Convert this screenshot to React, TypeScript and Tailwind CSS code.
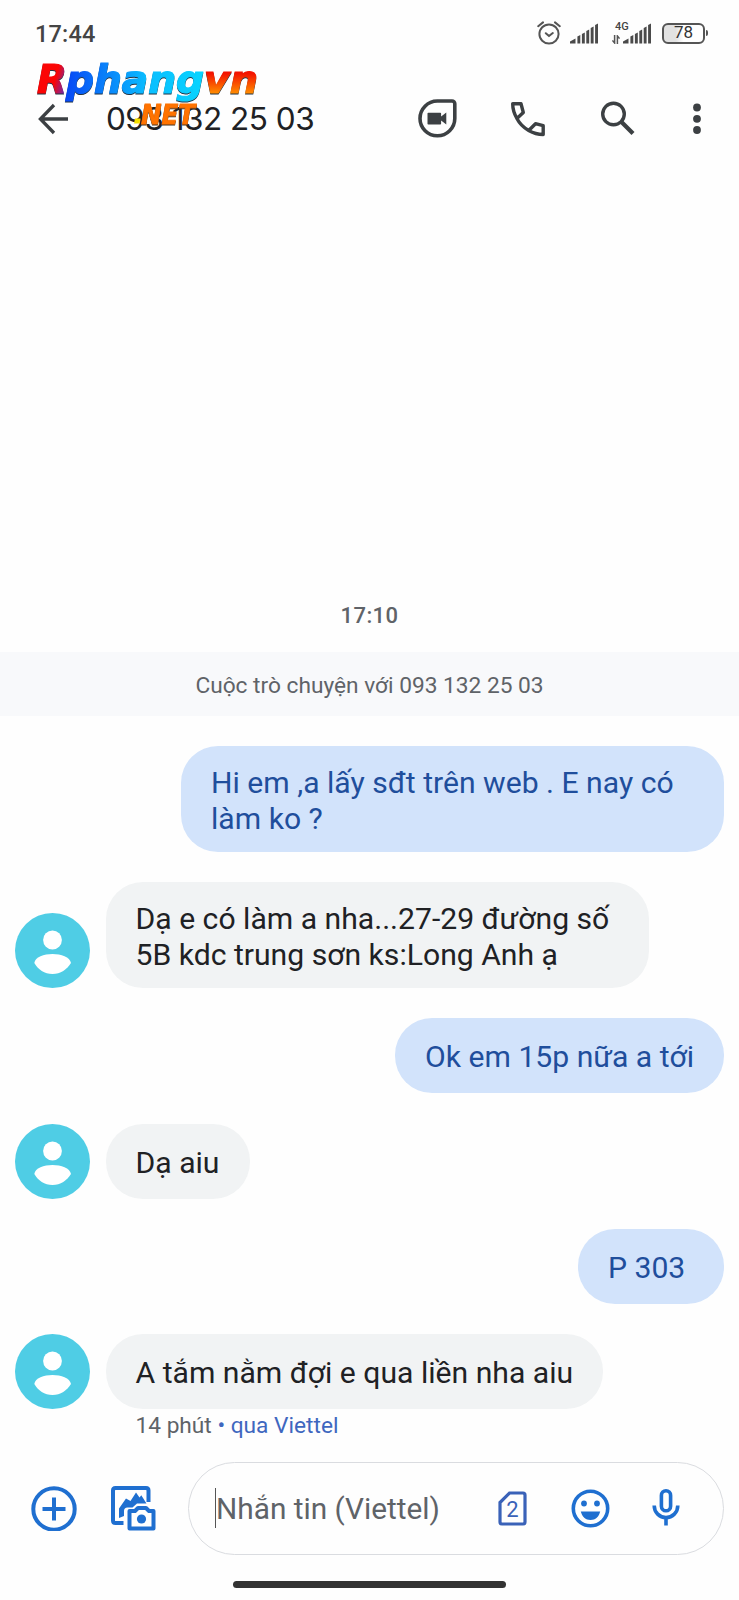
import type { ReactNode } from "react";

const INK = "#3c4043";
const BLUE = "#1f6fd0";

type Message = { text: string; mine?: boolean; size: string };

const messages: Message[] = [
  { text: "Hi em ,a lấy sđt trên web . E nay có\nlàm ko ?", mine: true, size: "w-[543px] leading-[35.5px]" },
  { text: "Dạ e có làm a nha...27-29 đường số\n5B kdc trung sơn ks:Long Anh ạ", size: "w-[543px] leading-[35.5px]" },
  { text: "Ok em 15p nữa a tới", mine: true, size: "w-[329px] leading-[40px]" },
  { text: "Dạ aiu", size: "w-[144px] leading-[40px]" },
  { text: "P 303", mine: true, size: "w-[146px] leading-[40px]" },
  { text: "A tắm nằm đợi e qua liền nha aiu", size: "w-[497px] leading-[40px]" },
];

function SignalBars() {
  return (
    <svg width="29" height="21" viewBox="0 0 29 21" fill="#4a4a4a">
      <path d="M0 20.5V18.5L5.5 15.5V20.5Z" />
      <path d="M7.4 20.5V13.5L10.3 12V20.5Z" />
      <path d="M11.9 20.5V11L14.8 9.5V20.5Z" />
      <path d="M16.3 20.5V8L19.2 6.5V20.5Z" />
      <path d="M20.7 20.5V5L23.6 3.5V20.5Z" />
      <path d="M25.1 20.5V2L28 .5V20.5Z" />
    </svg>
  );
}

function StatusBar() {
  return (
    <div className="flex h-[66px] items-center justify-between pl-[35px] pr-[31px]">
      <span className="mt-[3px] text-[23.5px] font-medium tracking-[0.2px] text-[#444]">17:44</span>
      <div className="flex items-center">
        <svg width="24" height="24" viewBox="0 0 24 24" fill="none" stroke="#555" strokeWidth="2" strokeLinecap="round">
          <circle cx="12" cy="13" r="9.6" />
          <path d="M8.8 12.2 12 15l3.8-3M1.2 5.2 6 1.4M22.8 5.2 18 1.4" />
        </svg>
        <div className="ml-[9px]">
          <SignalBars />
        </div>
        <div className="relative ml-[24px]">
          <SignalBars />
          <span className="absolute -left-[8px] -top-[2px] text-[11px] font-medium leading-[12px] text-[#444]">4G</span>
          <svg className="absolute -left-[11px] top-[12px]" width="8" height="9" viewBox="0 0 8 9" fill="none" stroke="#555" strokeWidth="1.5">
            <path d="M2.6 0v8L.4 5.4M5.4 9V1l2.2 2.6" />
          </svg>
        </div>
        <div className="ml-[10px] flex h-[21px] w-[43px] items-center justify-center rounded-[6px] border-2 border-[#555] bg-linear-to-r from-[#e2e2e2] from-30% to-white to-50% text-[17px] text-[#333]">
          78
        </div>
        <div className="ml-px h-[6px] w-[2px] rounded-r bg-[#555]" />
      </div>
    </div>
  );
}

function Logo() {
  return (
    <svg
      className="absolute left-[30px] top-[55px]"
      width="240"
      height="80"
      viewBox="0 0 240 80"
      fontFamily="DejaVu Sans"
      fontWeight="bold"
      fontStyle="italic"
    >
      <defs>
        <linearGradient id="logo-r" gradientUnits="userSpaceOnUse" x1="24" x2="38" y1="28" y2="32">
          <stop offset="0" stopColor="#fb0505" />
          <stop offset="1" stopColor="#5a30c8" />
        </linearGradient>
        <linearGradient id="logo-phang" gradientUnits="userSpaceOnUse" x1="36" x2="172" y1="0" y2="0">
          <stop offset="0" stopColor="#0848f5" />
          <stop offset="0.6" stopColor="#0abeff" />
          <stop offset="1" stopColor="#08d4ff" />
        </linearGradient>
        <linearGradient id="logo-vn" gradientUnits="userSpaceOnUse" x1="0" x2="0" y1="16" y2="38">
          <stop offset="0.1" stopColor="#f41200" />
          <stop offset="1" stopColor="#ff8a00" />
        </linearGradient>
      </defs>
      <g fontSize="39" strokeWidth="1.2" className="drop-shadow-[0.5px_1px_0.5px_#234]">
        <text x="7" y="38" textLength="30" lengthAdjust="spacingAndGlyphs" fill="url(#logo-r)" stroke="url(#logo-r)">R</text>
        <text x="36" y="38" textLength="138" lengthAdjust="spacingAndGlyphs" fill="url(#logo-phang)" stroke="url(#logo-phang)">phang</text>
        <text x="174" y="38" textLength="54" lengthAdjust="spacingAndGlyphs" fill="url(#logo-vn)" stroke="url(#logo-vn)">vn</text>
      </g>
      <g fontSize="27" strokeWidth="0.8" className="drop-shadow-[0.5px_1px_0.5px_#432]">
        <text x="111" y="69" textLength="54" lengthAdjust="spacingAndGlyphs" fill="#ff7300" stroke="#ff7300">NET</text>
      </g>
      <path d="M105 63.5h5.5l-1 5H104z" fill="#f5e000" />
    </svg>
  );
}

function Header() {
  return (
    <div className="flex h-[105px] items-center pl-[37px] pr-[36px]">
      <svg width="32" height="32" viewBox="0 0 32 32" fill="none" stroke={INK} strokeWidth="3.3">
        <path d="M31 16H4M17 2 3.4 16 17 30" />
      </svg>
      <span className="ml-[37px] w-[220px] whitespace-nowrap font-[Inter] text-[31.5px] font-normal tracking-[-0.5px] text-[#202124]">
        093 132 25 03
      </span>
      <svg className="ml-[92px]" width="39" height="39" viewBox="0 0 39 39">
        <path d="M19.3 2H34a2.8 2.8 0 0 1 2.8 2.8v14.7A17.4 17.4 0 1 1 19.3 2Z" fill="none" stroke={INK} strokeWidth="3.6" />
        <path d="M9.5 14.5q0-.8.8-.8h12q.8 0 .8.8v3l5.2-4v12l-5.2-4v3.2q0 .8-.8.8h-12q-.8 0-.8-.8z" fill={INK} />
      </svg>
      <svg className="ml-[53px]" width="36" height="36" viewBox="0 0 36 36" fill="none" stroke={INK} strokeWidth="3.4" strokeLinejoin="round">
        <path d="M2.7 2.8H11L13.3 11.5L6.9 17.5C4.3 13 2.7 8 2.7 2.8ZM6.9 17.5C9.5 22.5 13.5 26.5 18.7 29.5M18.7 29.5L25.5 22.7L33.2 24.7V33.5C28 33.5 23 32 18.7 29.5Z" />
      </svg>
      <svg className="ml-[54px]" width="35" height="35" viewBox="0 0 35 35" fill="none" stroke={INK}>
        <circle cx="13.5" cy="13" r="10.8" strokeWidth="3.4" />
        <path d="m21.5 21 11.5 11.5" strokeWidth="4.2" />
      </svg>
      <svg className="ml-auto" width="12" height="32" viewBox="0 0 12 32" fill={INK}>
        <circle cx="6" cy="4.5" r="3.9" />
        <circle cx="6" cy="15.8" r="3.9" />
        <circle cx="6" cy="27" r="3.9" />
      </svg>
    </div>
  );
}

function Avatar() {
  return (
    <svg className="shrink-0" width="75" height="75" viewBox="0 0 75 75">
      <circle cx="37.5" cy="37.5" r="37.5" fill="#4fcde5" />
      <circle cx="37.5" cy="27" r="9.4" fill="#fff" />
      <path d="M19.3 50C20 44 29 41 37.5 41S55 44 56 50C52 56.5 45.5 61 37.5 61S23 56.5 19.3 50Z" fill="#fff" />
    </svg>
  );
}

function Bubble({ message }: { message: Message }) {
  const tone = message.mine ? "bg-[#d2e3fb] text-[#1f4e9c]" : "bg-[#f1f3f4] text-[#202124]";
  return (
    <div className={message.mine ? "flex justify-end" : "flex items-end gap-[15.5px]"}>
      {!message.mine && <Avatar />}
      <p className={`${message.size} ${tone} min-h-[75px] whitespace-pre rounded-[37px] px-[30px] pb-[16px] pt-[19px] text-[30.15px]`}>
        {message.text}
      </p>
    </div>
  );
}

function IconBox({ className = "", children }: { className?: string; children: ReactNode }) {
  return (
    <svg className={`shrink-0 ${className}`} width="46" height="46" viewBox="0 0 46 46" fill="none" stroke={BLUE} strokeWidth="4">
      {children}
    </svg>
  );
}

function Composer() {
  return (
    <div className="mt-[21px] flex items-center pl-[31px] pr-[15px]">
      <IconBox>
        <circle cx="23" cy="24" r="20.7" />
        <path d="M23 12.5v23M11.5 24h23" />
      </IconBox>
      <IconBox className="ml-[33px]">
        <path d="M38.5 17V5.5Q38.5 3 36 3H5.5Q3 3 3 5.5V35.500Q3 38 5.500 38H13.5" />
        <path d="M9 33V23.500L16 13.500l4.500 2.500L26 7.500l3.500 5 1.800-2.300 5.200 8.300H27L22.500 22.500H17.500Q14 22.500 14 26V31Z" fill={BLUE} stroke="none" />
        <path d="M19.500 26h5.500l3-3h8l3 3h4.500V43.500h-24z" strokeLinejoin="round" />
        <circle cx="31.5" cy="34" r="4.6" fill={BLUE} stroke="none" />
      </IconBox>
      <div className="ml-[32px] flex h-[93px] flex-1 items-center rounded-full border-[1.5px] border-[#dadce0] pl-[26px]">
        <div className="h-[40px] w-px bg-[#555]" />
        <span className="mt-[2px] w-[282px] whitespace-nowrap text-[29.8px] text-[#5f6368]">Nhắn tin (Viettel)</span>
        <svg width="29" height="35" viewBox="0 0 29 35">
          <path d="M11.5 2H25q2 0 2 2v27q0 2-2 2H4q-2 0-2-2V11.5Z" fill="none" stroke="#3a62b8" strokeWidth="3.2" />
          <text x="14.5" y="25.5" textAnchor="middle" fontSize="22" fill="#3a62b8">2</text>
        </svg>
        <svg className="ml-[44px]" width="39" height="39" viewBox="0 0 39 39" fill={BLUE}>
          <circle cx="19.5" cy="19.5" r="17.2" fill="none" stroke={BLUE} strokeWidth="3.6" />
          <circle cx="13" cy="14.5" r="2.9" />
          <circle cx="26" cy="14.5" r="2.9" />
          <path d="M9.8 22.5h19.400C28 27.5 24.5 31 19.5 31s-8.500-3.500-9.700-8.500z" />
        </svg>
        <svg className="ml-[42px]" width="28" height="38" viewBox="0 0 28 38" fill="none" stroke={BLUE} strokeWidth="3.6">
          <rect x="9.4" y="1.8" width="9.2" height="20" rx="4.6" />
          <path d="M2.2 16.5C2.2 23.5 7.5 28.5 14 28.5s11.800-5 11.800-12M14 28.5v8" />
        </svg>
      </div>
    </div>
  );
}

export default function App() {
  return (
    <div className="relative flex h-[1600px] w-[739px] flex-col overflow-hidden bg-[#fefefe] font-[Roboto,sans-serif]">
      <StatusBar />
      <Header />
      <Logo />
      <p className="mt-[429px] text-center text-[22px] font-medium leading-[32px] tracking-[0.4px] text-[#5f6368]">17:10</p>
      <p className="mt-[20px] h-[64px] bg-[#f8f9fb] text-center text-[22.7px] leading-[67px] text-[#5f6368]">
        Cuộc trò chuyện với 093 132 25 03
      </p>
      <div className="mt-[30px] flex flex-col gap-[30.2px] px-[15px]">
        {messages.map((m) => (
          <Bubble key={m.text} message={m} />
        ))}
      </div>
      <p className="ml-[135.5px] mt-[2px] text-[22.7px] leading-[30px] text-[#5f6368]">
        14 phút <span className="text-[#3f67bf]">• qua Viettel</span>
      </p>
      <Composer />
      <div className="mx-auto mt-[26px] h-[7px] w-[273px] rounded-full bg-[#333]" />
    </div>
  );
}
